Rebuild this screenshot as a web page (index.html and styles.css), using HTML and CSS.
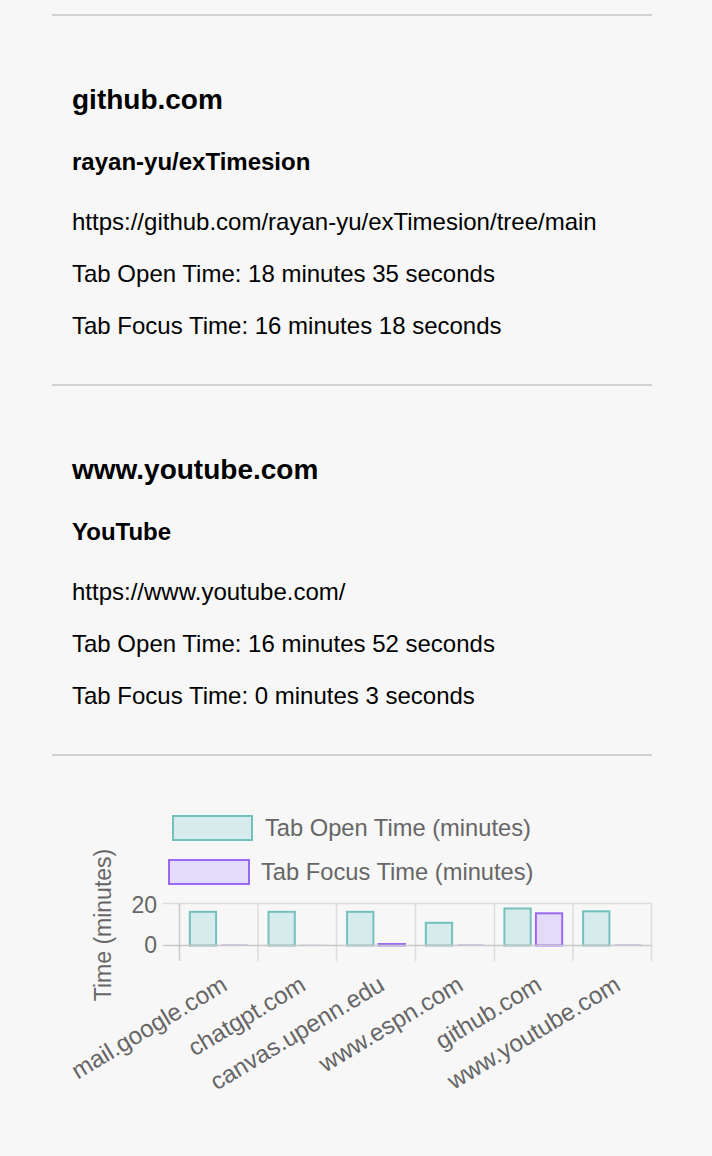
FILE: index.html
```html
<!DOCTYPE html>
<html>
<head>
<meta charset="utf-8">
<link rel="stylesheet" href="styles.css">
</head>
<body>
<div class="container">
  <div class="divider"></div>
  <div class="entry">
    <h3 class="site">github.com</h3>
    <h4 class="title">rayan-yu/exTimesion</h4>
    <p class="line">https://github.com/rayan-yu/exTimesion/tree/main</p>
    <p class="line">Tab Open Time: 18 minutes 35 seconds</p>
    <p class="line">Tab Focus Time: 16 minutes 18 seconds</p>
  </div>
  <div class="divider"></div>
  <div class="entry">
    <h3 class="site">www.youtube.com</h3>
    <h4 class="title">YouTube</h4>
    <p class="line">https://www.youtube.com/</p>
    <p class="line">Tab Open Time: 16 minutes 52 seconds</p>
    <p class="line">Tab Focus Time: 0 minutes 3 seconds</p>
  </div>
  <div class="divider"></div>
  <div class="chart">
    <svg class="chart-svg" width="612" height="345" viewBox="0 0 612 345">
      <g transform="translate(0 -2)">
      <!-- legend -->
      <rect class="open-bar" x="121" y="62" width="79" height="24"/>
      <text class="chart-text legend-text" x="213" y="82">Tab Open Time (minutes)</text>
      <rect class="focus-bar" x="117" y="106" width="80" height="24"/>
      <text class="chart-text legend-text" x="209" y="126">Tab Focus Time (minutes)</text>

      <!-- y axis title -->
      <text class="chart-text" text-anchor="middle" dominant-baseline="central" transform="translate(51 171) rotate(-90)">Time (minutes)</text>

      <!-- y ticks -->
      <text class="chart-text" text-anchor="end" x="105" y="158.5">20</text>
      <text class="chart-text" text-anchor="end" x="105" y="199">0</text>

      <!-- grid -->
      <line class="grid" x1="111" y1="149.5" x2="599.5" y2="149.5"/>
      <line class="grid" x1="206" y1="149.5" x2="206" y2="207"/>
      <line class="grid" x1="284.5" y1="149.5" x2="284.5" y2="207"/>
      <line class="grid" x1="363.5" y1="149.5" x2="363.5" y2="207"/>
      <line class="grid" x1="442.5" y1="149.5" x2="442.5" y2="207"/>
      <line class="grid" x1="521" y1="149.5" x2="521" y2="207"/>
      <line class="grid" x1="599.5" y1="149.5" x2="599.5" y2="207"/>
      <line class="axis" x1="127.5" y1="149.5" x2="127.5" y2="207"/>

      <!-- bars: open -->
      <rect class="open-bar" x="137.8" y="157.8" width="26.3" height="33.7"/>
      <rect class="open-bar" x="216.5" y="157.8" width="26.3" height="33.7"/>
      <rect class="open-bar" x="295.1" y="157.8" width="26.3" height="33.7"/>
      <rect class="open-bar" x="373.8" y="168.8" width="26.3" height="22.7"/>
      <rect class="open-bar" x="452.4" y="154.5" width="26.3" height="37"/>
      <rect class="open-bar" x="531.1" y="157.3" width="26.3" height="34.2"/>

      <!-- bars: focus -->
      <rect class="focus-line" x="169.3" y="190.5" width="26.3" height="1.2"/>
      <rect class="focus-line" x="248" y="190.8" width="26.3" height="0.8"/>
      <rect class="focus-bar" x="326.6" y="190" width="26.3" height="1.5"/>
      <rect class="focus-line" x="405.3" y="190.5" width="26.3" height="1.2"/>
      <rect class="focus-bar" x="483.9" y="159.3" width="26.3" height="32.2"/>
      <rect class="focus-line" x="562.6" y="190.5" width="26.3" height="1.2"/>

      <line class="axis" x1="111" y1="191.5" x2="599.5" y2="191.5"/>

      <!-- x labels -->
      <text class="chart-text tick-label" text-anchor="end" transform="translate(176.7 235) rotate(-31)">mail.google.com</text>
      <text class="chart-text tick-label" text-anchor="end" transform="translate(255.4 235) rotate(-31)">chatgpt.com</text>
      <text class="chart-text tick-label" text-anchor="end" transform="translate(334 235) rotate(-31)">canvas.upenn.edu</text>
      <text class="chart-text tick-label" text-anchor="end" transform="translate(412.7 235) rotate(-31)">www.espn.com</text>
      <text class="chart-text tick-label" text-anchor="end" transform="translate(491.3 235) rotate(-31)">github.com</text>
      <text class="chart-text tick-label" text-anchor="end" transform="translate(570 235) rotate(-31)">www.youtube.com</text>
      </g>
    </svg>
  </div>
</div>
</body>
</html>
```
FILE: styles.css
```css
html, body {
  margin: 0;
  padding: 0;
  background: #f7f7f7;
}

body {
  padding-top: 14px;
  font-family: "Liberation Sans", Arial, sans-serif;
  color: #000;
}

.container {
  width: 600px;
  margin-left: 52px;
}

.divider {
  height: 2px;
  background: #d3d3d3;
}

.entry {
  padding: 68px 20px 44px;
}

.site {
  margin: 0 0 32px;
  font-size: 28px;
  line-height: 32px;
  font-weight: bold;
}

.title {
  margin: 0 0 32px;
  font-size: 24px;
  line-height: 28px;
  font-weight: bold;
}

.line {
  margin: 0 0 24px;
  font-size: 24px;
  line-height: 28px;
}

.line:last-child {
  margin-bottom: 0;
}

.chart-svg {
  display: block;
  overflow: visible;
}

.chart-text {
  font-family: "Liberation Sans", Arial, sans-serif;
  font-size: 23px;
  fill: #666;
}

.legend-text {
  font-size: 23.7px;
}

.tick-label {
  font-size: 24.2px;
}

.grid {
  stroke: #dcdcdc;
  stroke-width: 1.5;
}

.axis {
  stroke: #c8c8c8;
  stroke-width: 1.5;
}

.open-bar {
  fill: #d6ecec;
  stroke: #74c0bd;
  stroke-width: 2;
}

.focus-bar {
  fill: #e4daf9;
  stroke: #9a69f2;
  stroke-width: 2;
}

.focus-line {
  fill: #9a69f2;
  opacity: 0.7;
}
```
